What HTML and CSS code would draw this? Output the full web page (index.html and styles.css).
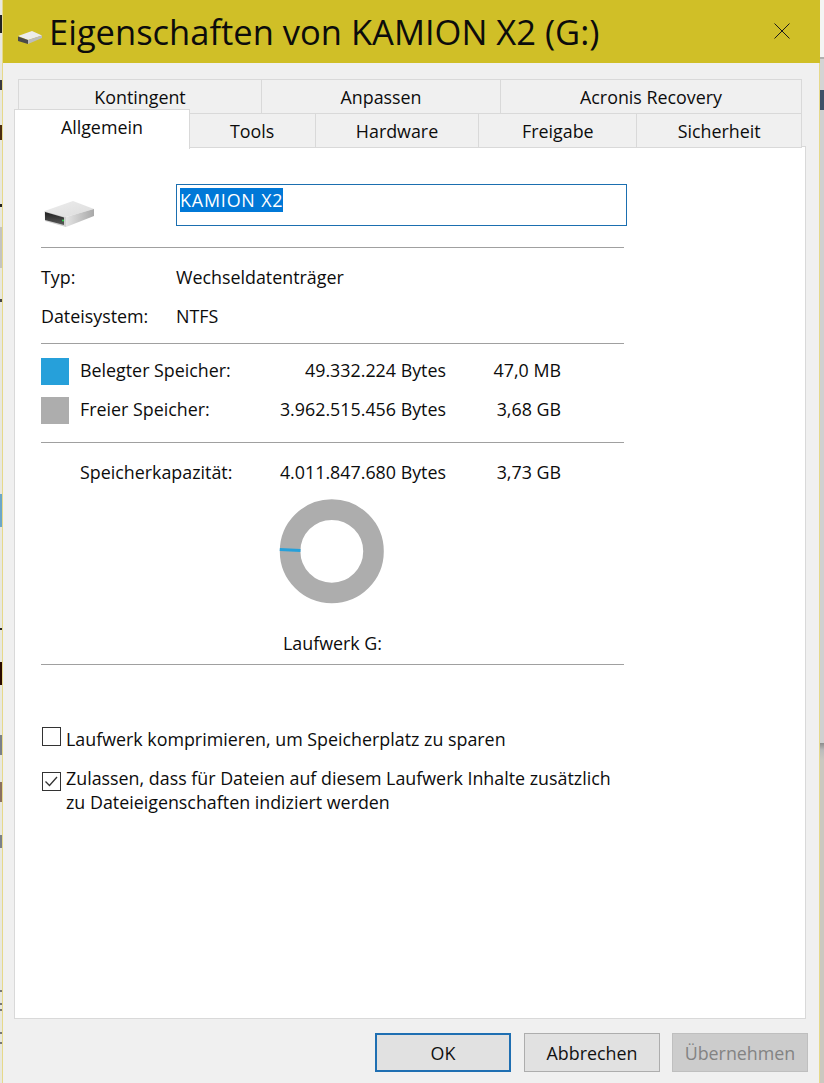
FILE: index.html
```html
<!DOCTYPE html>
<html lang="de">
<head>
<meta charset="utf-8">
<title>Eigenschaften von KAMION X2 (G:)</title>
<link rel="stylesheet" href="styles.css">
</head>
<body>
<div class="desk-left"></div>
<div class="window">
  <header class="titlebar">
    <svg class="title-icon" width="26" height="16" viewBox="0 0 26 16"><path d="M1 6 L15 1 L25 5.5 L11 10 Z" fill="#ececec"/><path d="M1 6.5 L11 10 L11 14 L1 11 Z" fill="#4a4a4a"/><path d="M11 10 L25 5.5 L25 8 L11 14 Z" fill="#bdbdbd"/></svg>
    <h1 class="title">Eigenschaften von KAMION X2 (G:)</h1>
    <svg class="close" width="16" height="16" viewBox="0 0 16 16"><path d="M0.5 0.5 L15.5 15.5 M15.5 0.5 L0.5 15.5" stroke="#1c1c1c" stroke-width="1" fill="none"/></svg>
  </header>
  <div class="body">
    <div class="tabs">
      <div class="tab-row back">
        <div class="tab t-kontingent">Kontingent</div>
        <div class="tab t-anpassen">Anpassen</div>
        <div class="tab t-acronis">Acronis Recovery</div>
      </div>
      <div class="tab-row front">
        <div class="tab active">Allgemein</div>
        <div class="tab t-tools">Tools</div>
        <div class="tab t-hardware">Hardware</div>
        <div class="tab t-freigabe">Freigabe</div>
        <div class="tab t-sicherheit">Sicherheit</div>
      </div>
    </div>
    <section class="panel">
      <div class="name-row">
        <svg class="drive" width="52" height="30" viewBox="0 0 52 30">
          <defs>
            <linearGradient id="top" x1="0" y1="0" x2="1" y2="1"><stop offset="0" stop-color="#ededed"/><stop offset="1" stop-color="#dcdcdc"/></linearGradient>
            <linearGradient id="side" x1="0" y1="0" x2="1" y2="0"><stop offset="0" stop-color="#e4e4e4"/><stop offset="1" stop-color="#a8a8a8"/></linearGradient>
            <linearGradient id="slot" x1="0" y1="0" x2="0" y2="1"><stop offset="0" stop-color="#1f1f1f"/><stop offset="1" stop-color="#5a5a5a"/></linearGradient>
          </defs>
          <path d="M0.5 12 L29 2 L50 10 L22 18 Z" fill="url(#top)"/>
          <path d="M22 18 L50 10 L50 17 L22 28 Z" fill="url(#side)"/>
          <path d="M0.5 12 L22 18 L22 28 L1 22 Z" fill="#cfcfcf"/>
          <path d="M1 13 L20 18.5 L20 26 L1 21 Z" fill="url(#slot)"/>
          <circle cx="19" cy="21.5" r="1.1" fill="#35d34f"/>
        </svg>
        <div class="name-input"><span class="selected">KAMION X2</span></div>
      </div>
      <hr class="sep sep-name">
      <div class="meta">
        <span>Typ:</span><span>Wechseldatenträger</span>
        <span>Dateisystem:</span><span>NTFS</span>
      </div>
      <hr class="sep sep-meta">
      <div class="usage">
        <i class="swatch used"></i><span>Belegter Speicher:</span><span class="num">49.332.224 Bytes</span><span class="num">47,0 MB</span>
        <i class="swatch free"></i><span>Freier Speicher:</span><span class="num">3.962.515.456 Bytes</span><span class="num">3,68 GB</span>
      </div>
      <hr class="sep sep-usage">
      <div class="usage capacity">
        <i></i><span>Speicherkapazität:</span><span class="num">4.011.847.680 Bytes</span><span class="num">3,73 GB</span>
      </div>
      <div class="chart">
        <svg width="106" height="106" viewBox="0 0 106 106">
          <circle cx="52.8" cy="52.3" r="41.7" fill="none" stroke="#adadad" stroke-width="20.6"/>
          <path d="M0.8 50.6 L21.5 51.6" stroke="#26a0da" stroke-width="3" fill="none"/>
        </svg>
      </div>
      <div class="drive-label">Laufwerk G:</div>
      <hr class="sep sep-drive">
      <label class="check first"><i class="box"></i><span>Laufwerk komprimieren, um Speicherplatz zu sparen</span></label>
      <label class="check second"><i class="box"><svg width="19" height="19" viewBox="0 0 19 19"><path d="M3.5 9.5 L7.5 13.5 L15 5" fill="none" stroke="#333" stroke-width="1.3"/></svg></i><span>Zulassen, dass für Dateien auf diesem Laufwerk Inhalte zusätzlich<br>zu Dateieigenschaften indiziert werden</span></label>
    </section>
    <footer class="buttons">
      <button class="btn default">OK</button>
      <button class="btn">Abbrechen</button>
      <button class="btn disabled">Übernehmen</button>
    </footer>
  </div>
</div>
<div class="desk-right"></div>
</body>
</html>
```
FILE: styles.css
```css
* { box-sizing: border-box; }
html, body { margin: 0; padding: 0; }
body {
  width: 824px; height: 1083px; overflow: hidden;
  display: flex; background: #fff;
  font-family: "Open Sans", "Liberation Sans", sans-serif;
  font-size: 17.85px; color: #0c0c0c;
}
.desk-left {
  width: 3px; flex: none; border-right: 1px solid #e6d98a;
  background: linear-gradient(to bottom,
    #e8e8e0 0, #e8e8e0 15px, #222 15px, #222 33px, #e8e8e0 33px,
    #e8e8e0 80px, #3a3a40 80px, #3a3a40 90px, #e8e8e0 90px,
    #e8e8e0 125px, #4a2c10 125px, #4a2c10 140px, #e8e8e0 140px,
    #e8e8e0 204px, #222 204px, #222 207px, #e8e8e0 207px,
    #e8e8e0 227px, #c4c4c0 227px, #c4c4c0 268px, #e8e8e0 268px,
    #e8e8e0 299px, #444 299px, #444 302px, #e8e8e0 302px,
    #e8e8e0 494px, #6ba7c8 494px, #6ba7c8 527px, #e8e8e0 527px,
    #e8e8e0 628px, #222 628px, #222 630px, #e8e8e0 630px,
    #e8e8e0 662px, #2a0a00 662px, #2a0a00 685px, #e8e8e0 685px,
    #e8e8e0 735px, #7a8088 735px, #7a8088 755px, #e8e8e0 755px,
    #e8e8e0 782px, #8a7060 782px, #8a7060 802px, #e8e8e0 802px,
    #e8e8e0 835px, #7a8088 835px, #7a8088 848px, #e8e8e0 848px,
    #e8e8e0 990px, #777 990px, #777 992px, #e8e8e0 992px,
    #e8e8e0 1003px, #777 1003px, #777 1005px, #e8e8e0 1005px,
    #e8e8e0 1009px, #777 1009px, #777 1011px, #e8e8e0 1011px,
    #e8e8e0 1032px, #777 1032px, #777 1034px, #e8e8e0 1034px,
    #e8e8e0 1042px, #777 1042px, #777 1044px, #e8e8e0 1044px);
}
.desk-right {
  width: 4px; flex: none;
  background: linear-gradient(to bottom,
    #f4f4f4 0, #f4f4f4 57px, #b0b0b0 57px, #b0b0b0 59px, #d4d4d4 59px,
    #d4d4d4 90px, #3f5068 90px, #3f5068 110px, #d0d0d0 110px,
    #d0d0d0 743px, #8c8c8c 743px, #bbb 750px, #cbc8c0 760px, #cbc8c0 1083px);
}
.window {
  width: 817px; height: 1083px; display: flex; flex-direction: column; flex: none;
  background: #f0f0f0;
}
.titlebar {
  height: 63px; background: #d0bf27; display: flex; align-items: center;
  padding: 0 30px 0 14px; flex: none;
}
.title-icon { flex: none; margin-right: 6px; margin-top: 12px; }
.title { margin: 0; font-size: 34.5px; font-weight: 400; line-height: 63px; flex: 1; white-space: nowrap; color: #0c0c0c; }
.close { flex: none; margin-top: -1px; }
.body {
  flex: 1; display: flex; flex-direction: column; padding: 16px 0 0 11px;
  border-right: 1px solid #e6d98a;
}
.tabs { width: 792px; height: 68px; flex: none; position: relative; z-index: 1; }
.tab-row { display: flex; height: 34px; margin-left: 4px; width: 784px; }
.tab {
  display: flex; align-items: center; justify-content: center;
  background: #f0f0f0; border: 1px solid #d9d9d9; border-left: 0; white-space: nowrap;
  height: 35px; padding-top: 1px;
}
.back .tab { border-bottom: 0; padding-top: 0; }
.back .tab:first-child { border-left: 1px solid #d9d9d9; }
.t-kontingent { width: 244px; }
.t-anpassen { width: 239px; }
.t-acronis { width: 301px; }
.front { position: relative; margin-left: 0; width: 788px; }
.active {
  width: 176px; height: 40px; margin-top: -4px; background: #fff;
  border: 1px solid #d9d9d9; border-bottom: 0; padding: 0 0 5px; position: relative; z-index: 2;
}
.t-tools { width: 126px; }
.t-hardware { width: 164px; }
.t-freigabe { width: 158px; }
.t-sicherheit { width: 165px; }
.panel {
  width: 792px; height: 873px; flex: none; background: #fff;
  border: 1px solid #d9d9d9; margin-top: -1px; padding: 37px 0 0 26px;
}
.name-row { display: flex; align-items: flex-start; height: 63px; }
.drive { flex: none; margin: 15px 0 0 3px; }
.name-input {
  width: 451px; height: 42px; margin-left: 80px; flex: none;
  border: 1px solid #1b6fb0; padding: 3px; line-height: 24px;
}
.selected { display: inline-block; background: #0078d7; color: #fff; height: 24px; line-height: 24px; letter-spacing: 0.85px; }
.sep { width: 583px; height: 1px; margin: 0; border: 0; background: #a0a0a0; }
.meta {
  display: grid; grid-template-columns: 135px 1fr; row-gap: 14px; align-content: start;
  padding-top: 17px; height: 95px; line-height: 25px;
}
.usage {
  display: grid; grid-template-columns: 39px 181px 185px 115px; row-gap: 12px; align-items: center; align-content: start;
  padding-top: 14px; height: 98px;
}
.usage span { padding-bottom: 2px; line-height: 23px; }
.capacity { padding-top: 17px; height: 42px; }
.capacity span { padding-bottom: 0; line-height: 25px; }
.swatch { display: block; width: 28px; height: 27px; }
.used { background: #26a0da; }
.free { background: #adadad; }
.num { text-align: right; white-space: nowrap; }
.chart { display: flex; justify-content: center; width: 583px; padding: 14px 2px 0 0; height: 143px; }
.drive-label { width: 583px; text-align: center; line-height: 25px; height: 36px; padding-top: 3px; }
.check { display: flex; gap: 5px; align-items: flex-start; margin-left: 1px; line-height: 24px; }
.check.first { margin-top: 62px; }
.check.second { margin-top: 15px; }
.box { width: 19px; height: 19px; flex: none; border: 1px solid #333; background: #fff; display: block; position: relative; }
.second .box { margin-top: 6px; }
.box svg { position: absolute; left: -1px; top: -1px; }
.buttons { display: flex; justify-content: flex-end; gap: 12px; padding: 14px 0 0; width: 794px; }
.btn {
  width: 136px; height: 39px; font: inherit; color: #111; background: #e1e1e1;
  border: 1px solid #adadad; padding: 0;
}
.default { border: 2px solid #1f6fb2; margin-right: 1px; }
.disabled { background: #ccc; color: #838383; border-color: #bfbfbf; }
```
